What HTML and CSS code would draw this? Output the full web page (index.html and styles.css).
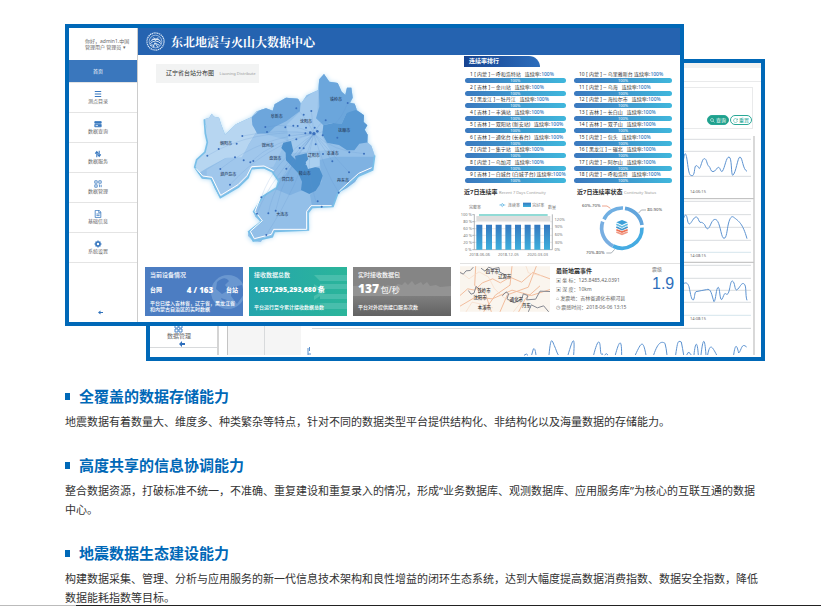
FILE: index.html
```html
<!DOCTYPE html>
<html lang="zh-CN">
<head>
<meta charset="utf-8">
<meta name="viewport" content="width=device-width, initial-scale=1">
<title>东北地震与火山大数据中心</title>
<link rel="stylesheet" href="styles.css">
</head>
<body>
<main class="page">
  <div class="hero">
    <section class="window window-back">
      <div class="back-strip"></div>
      <div class="back-bar"></div>
      <div class="back-filter">
        <button class="pill pill-solid" type="button"><svg viewBox="0 0 10 10"><circle cx="4" cy="4" r="3"/><path d="M6 6l3 3"/></svg>查询</button>
        <button class="pill" type="button"><svg viewBox="0 0 10 10"><path d="M8.500 3A4 4 0 1 0 9 6M9 1v3H6"/></svg>重置</button>
      </div>
      <svg class="back-plot" viewBox="150 128 611 228">
        <rect x="227" y="320" width="74" height="34" fill="#f5f5f5"/>
        <g fill="none" stroke="#d8dadc">
          <path d="M218 320V354" stroke="#d4d4d4" stroke-width="2"/>
          <path d="M227.500 320V354" stroke="#c4c4c4"/>
          <path d="M264.500 320V354M150 346.500H217"/>
          <path d="M312 327.500H751"/>
        </g>
        <path d="M175 324h3v3h-3zM179 324h3v3h-3zM175 328h3v3h-3zM179 328h3v3h-3z" fill="none" stroke="#4a86c8"/>
        <text x="179" y="337" class="t6 mid">数据管理</text>
        <path d="M179 343l3-3v2h3v2h-3v2z" fill="#2f6fbd"/>
        <path d="M308 347v7M309.500 346v4M308 353h3" stroke="#5b8fca" fill="none"/>
        <g transform="translate(680 50) scale(.3333)" fill="none">
          <path d="M0 265H213M0 301H213M0 376H213M0 451H213M0 491H213M0 529H213M0 568H213M0 643H213M0 682H213M0 718H213M0 754H213M0 832H213" stroke="#d9dcdf" stroke-width="3"/>
          <path d="M0 604H213M0 793H213" stroke="#d5e5ed" stroke-width="3"/>
          <path d="M0 443H222M0 634H222" stroke="#b9b9b9" stroke-width="3"/>
          <path d="M222 255V912" stroke="#c6c6c6" stroke-width="4"/>
          <g stroke="#5b92d0" stroke-width="3">
            <path d="M8 345C14 292 18 301 23 340S32 373 38 374C46 367 42 344 49 344S56 358 60 350S67 323 73 323C81 323 80 341 86 345S91 362 99 362S111 348 116 349S122 365 127 361C135 350 138 318 147 318C156 318 153 371 158 373C168 368 173 317 180 318C188 320 188 355 201 361"/>
            <path d="M8 510C17 481 20 492 23 510C29 536 38 497 49 498C56 500 55 510 60 514C67 513 70 517 74 521C82 543 87 532 94 516C101 502 108 503 113 511C122 526 124 562 132 562S141 537 145 519C150 499 155 495 160 498C177 511 188 517 201 563"/>
            <path d="M8 700C18 692 23 696 27 707C32 730 34 748 40 747C45 741 43 724 48 722C58 719 69 719 79 716C94 709 95 735 102 752C108 748 108 709 115 709C120 712 119 747 125 746C132 736 132 723 138 729C150 738 149 689 157 690C166 694 163 717 170 717C180 711 183 695 191 698C201 702 195 732 201 748"/>
          </g>
        </g>
        <g transform="translate(440 310) scale(.3333)" fill="none" stroke="#5b92d0" stroke-width="3">
          <path d="M252 133L259 129L264 133M275 132L280 114Q285 108 288 132M327 132C333 68 337 91 343 104S350 124 355 132M384 132C396 92 406 60 401 132M461 132C470 96 479 76 481 111S487 119 488 132M494 132L499 128L504 132M526 132C536 95 545 73 545 132M586 132C604 93 609 84 618 132M641 132C655 90 666 91 675 97Q679 111 681 132M707 132C713 90 714 88 724 93Q728 112 731 132M740 132L746 123L754 132M762 132C766 91 772 87 775 132M783 132C789 80 794 75 798 132M803 132C810 94 817 107 830 132M881 132C886 98 890 99 896 126C905 119 904 93 920 108"/>
        </g>
        <g class="t4" text-anchor="middle"><text x="698" y="192">14:06:15</text><text x="698" y="256">14:08:15</text><text x="698" y="319">14:08:15</text></g>
      </svg>
    </section>

    <section class="window window-front">
      <nav class="side">
        <div class="side-user"><span>你好，admin1.中国</span><span>管理用户 管理员 ▾</span></div>
        <a class="side-item side-active" href="#home">首页</a>
        <a class="side-item" href="#stations"><svg viewBox="0 0 10 10"><path d="M1 2h8M1 5h8M1 8h8" stroke-width="1.300"/></svg>测点目录</a>
        <a class="side-item" href="#monitor"><svg viewBox="0 0 10 10"><path d="M1 2h8v2H1zM1 5.500h8v3H1z" fill="currentColor"/><path d="M2 7h3" stroke="#fff"/></svg>数据查询</a>
        <a class="side-item" href="#service"><svg viewBox="0 0 10 10"><path d="M3.500 9V3M1.500 4.500L3.500 2L5.500 4.500M6.500 1v6M4.500 5.500L6.500 8L8.500 5.500" stroke-width="1.300"/></svg>数据服务</a>
        <a class="side-item" href="#data"><svg viewBox="0 0 10 10"><path d="M1 1h3v3H1zM6 1h3v3H6zM1 6h3v3H1zM6 6h1v3M9 6v3"/></svg>数据管理</a>
        <a class="side-item" href="#basic"><svg viewBox="0 0 10 10"><path d="M1.500.5h5l2 2v7h-7zM6 .5v3h2.500M3 5h4M3 7h4"/></svg>基础信息</a>
        <a class="side-item" href="#system"><svg viewBox="0 0 10 10"><circle cx="5" cy="5" r="2.500" stroke-width="2"/><path d="M5 .5v2M5 7.500v2M.5 5h2M7.500 5h2M2 2l1 1M7 7l1 1M8 2L7 3M2 8l1-1" stroke-width="1.500"/></svg>系统设置</a>
        <button class="side-fold" type="button" aria-label="收起"><svg viewBox="0 0 10 10"><path d="M0 5l5-4v3h5v2H5v3z" fill="currentColor"/></svg></button>
      </nav>
      <div class="board">
        <header class="board-head">
          <svg class="logo" viewBox="0 0 60 60" fill="none" stroke="#dbe8f7"><circle cx="30" cy="30" r="27" stroke-width="4" stroke-dasharray="4 2"/><circle cx="30" cy="30" r="20" stroke-width="2"/><path d="M14 30Q30 14 47 30M13 37Q30 20 48 37M22 49L28 34L38 49M29 35L43 42M13 43Q21 36 26 46M18 23H42M24 17L30 27L38 17" stroke-width="3"/></svg>
          <h1>东北地震与火山大数据中心</h1>
        </header>
        <div class="board-body">
          <div class="left">
            <div class="stage">
              <p class="map-label">辽宁省台站分布图 <small>Liaoning Distribute</small></p>
              <svg class="map" viewBox="0 0 600 540">
                <defs><clipPath id="land"><path id="shape" d="M43 163L58 158L65 146L72 155L87 158L93 178L105 209L138 178L185 156L200 139L228 130L248 137L254 118L288 98L324 101L333 116L350 91L384 76L388 43L402 27L418 50L443 54L455 80L466 90L471 68L484 68L488 98L480 113L494 116L501 136L522 151L521 171L532 181L524 194L533 209L532 232L544 242L554 271L548 315L506 333L495 350L470 369L444 383L429 424L367 427L354 443L355 495L253 499L247 515L222 517L212 531L190 528L174 512L176 500L214 470L196 455L191 440L209 416L219 394L260 368L266 348L247 320L222 308L184 311L174 338L145 366L115 385L91 398L75 371L63 341L37 339L25 324L14 306L20 284L45 261L52 232L46 205L50 181L43 178Z"/></clipPath></defs>
                <g class="map-glow"><use href="#shape"/></g>
                <g clip-path="url(#land)">
                  <path d="M0 0H600V540H0Z" fill="#93bfe8"/>
                  <path d="M30 130H200V200L175 240L160 280H105L50 310L0 340Z" fill="#b7d6f1"/>
                  <path d="M200 200L170 250L155 277L110 278L50 315V410H180V320L250 305L290 225Z" fill="#a0c7ec"/>
                  <path d="M185 156L228 120L290 85L333 105L330 138L290 168L255 185L235 205L202 206L187 180Z" fill="#6da6dc"/>
                  <path d="M333 110L385 70L382 160L400 180L396 214L420 255L300 265L290 180L330 140Z" fill="#a2c9ed"/>
                  <path d="M385 20H500V140L470 143L455 176L425 174L400 181L378 160L388 125Z" fill="#6ba6dc"/>
                  <path d="M400 181L430 174L455 176L470 143L498 135L540 155V231L508 236L493 256L471 256L447 240L411 233L397 207Z" fill="#5798d3"/>
                  <path d="M389 285L430 275H560V400L440 430H367L360 390L395 350Z" fill="#7fb2e2"/>
                  <path d="M210 370L285 330L325 270L355 310L360 370L325 380L300 391L255 372Z" fill="#80b2e2"/>
                  <path d="M280 233L303 228L310 258L303 270L317 284L315 273L350 265L354 282L346 300L388 309L398 332L389 359L377 377L358 387L333 375L336 350L325 325L288 286L287 263L274 249Z" fill="#4b8fcc"/>
                  <path d="M350 262L389 270V303L354 312L347 291L356 283Z" fill="#a9cff0"/>
                </g>
                <path d="M43 163L46 205L52 232L45 261L20 284L14 306L37 339L63 341L91 398L145 366L174 338L184 311L222 308L247 320L266 348L260 368L219 394L191 440L214 470L176 500L190 528L247 515L253 499L355 495L354 443L367 427L429 424L444 383L506 333L548 315L554 271" fill="none" stroke="#79bfe8" stroke-width="5"/>
                <path d="M18 310L38 333L66 337L92 391L144 359L171 332L185 305L222 303L251 317M209 403L195 439L217 467L181 499L193 521L244 508L251 493H350V439L363 422H425M448 378L506 325L545 308" fill="none" stroke="#fff" stroke-width="3"/>
                <g fill="none" stroke="#5f8fcb" opacity=".55"><path d="M372 206Q190 190 52 272M372 206Q220 210 91 312M372 206Q230 240 120 359M372 206Q250 225 181 292M372 206Q250 290 214 397M372 206Q280 320 257 437M372 206Q250 350 235 445M372 206Q240 340 201 446M372 206Q320 370 229 510M372 206Q320 280 289 311M372 206Q340 300 378 411M372 206Q400 310 446 383M372 206Q420 260 477 322M372 206Q430 260 522 266M372 206Q440 200 473 114M372 206Q350 160 319 130M372 206Q300 170 226 186M372 206Q270 190 157 213M372 206Q390 170 407 166M372 206L364 138M372 206L329 249M372 206L427 289M372 206L298 211M372 206L347 241M372 206L377 238"/></g>
                <g fill="#3a6fbd"><circle cx="52" cy="272" r="3"/><circle cx="91" cy="312" r="3"/><circle cx="120" cy="359" r="3"/><circle cx="181" cy="292" r="3"/><circle cx="190" cy="288" r="3"/><circle cx="214" cy="397" r="3"/><circle cx="257" cy="437" r="3"/><circle cx="235" cy="445" r="3"/><circle cx="201" cy="446" r="3"/><circle cx="229" cy="510" r="3"/><circle cx="289" cy="311" r="3"/><circle cx="383" cy="409" r="3"/><circle cx="395" cy="425" r="3"/><circle cx="446" cy="383" r="3"/><circle cx="477" cy="322" r="3"/><circle cx="522" cy="266" r="3"/><circle cx="478" cy="262" r="3"/><circle cx="473" cy="114" r="3"/><circle cx="319" cy="130" r="3"/><circle cx="226" cy="186" r="3"/><circle cx="231" cy="201" r="3"/><circle cx="157" cy="213" r="3"/><circle cx="86" cy="252" r="3"/><circle cx="140" cy="236" r="3"/><circle cx="135" cy="277" r="3"/><circle cx="161" cy="286" r="3"/><circle cx="407" cy="166" r="3"/><circle cx="364" cy="138" r="3"/><circle cx="341" cy="149" r="3"/><circle cx="329" cy="249" r="3"/><circle cx="341" cy="250" r="3"/><circle cx="427" cy="289" r="3"/><circle cx="399" cy="267" r="3"/><circle cx="298" cy="211" r="3"/><circle cx="310" cy="182" r="3"/><circle cx="286" cy="187" r="3"/><circle cx="323" cy="183" r="3"/><circle cx="319" cy="223" r="3"/><circle cx="377" cy="238" r="3"/><circle cx="442" cy="218" r="3"/><circle cx="398" cy="211" r="3"/><circle cx="346" cy="205" r="3"/><circle cx="361" cy="203" r="4"/><circle cx="372" cy="206" r="5"/><circle cx="382" cy="199" r="4"/><circle cx="374" cy="188" r="3"/><circle cx="348" cy="188" r="3"/></g>
                <g class="map-city"><text x="108" y="240">朝阳市</text><text x="115" y="333">葫芦岛市</text><text x="233" y="245">锦州市</text><text x="260" y="159">阜新市</text><text x="348" y="173">沈阳市</text><text x="438" y="109">铁岭市</text><text x="463" y="201">抚顺市</text><text x="256" y="285">盘锦市</text><text x="371" y="275">辽阳市</text><text x="428" y="269">本溪市</text><text x="344" y="331">鞍山市</text><text x="293" y="348">营口市</text><text x="459" y="350">丹东市</text><text x="277" y="452">大连市</text></g>
              </svg>
            </div>
            <div class="cards">
              <article class="card card-blue">
                <svg class="card-art" viewBox="0 0 98 49"><circle cx="83" cy="25" r="17" fill="#6a97d0"/><path d="M72 15Q80 8 84 14L80 18L84 23L77 27L71 22ZM87 20L97 18L99 27L92 37L86 29ZM76 31L82 33L80 40Z" fill="#4c7dc2"/></svg>
                <h2>当前设备情况</h2><p class="card-value card-split"><span>台网</span><b>4 / 163</b><span>台站</span></p><p class="card-note">平台已接入吉林省，辽宁省，黑龙江省<br>和内蒙古自治区的实时数据</p>
              </article>
              <article class="card card-green">
                <svg class="card-art" viewBox="0 0 98 49" fill="#48beac"><path d="M65 8H98V14H71ZM71 17H98V22H71ZM71 27H98V32H71ZM65 36H98V42H65L75 37ZM65 17L77 25L65 33V29L72 25L65 21Z"/></svg>
                <h2>接收数据总数</h2><p class="card-value card-count"><b>1,557,295,293,680 条</b></p><p class="card-note">平台运行至今累计接收数据总数</p>
              </article>
              <article class="card card-grey">
                <svg class="card-art" viewBox="0 0 98 49"><path d="M0 19L24 18L30 20L35 18L40 20L45 17L49 18L52 15L55 18L59 14L62 18L68 15L70 18L74 15L77 19L83 18L87 20L98 19V29H0Z" fill="#939393"/></svg>
                <h2>实时接收数据包</h2><p class="card-value"><strong>137</strong> <span>包/秒</span></p><p class="card-note">平台对外提供接口服务次数</p>
              </article>
            </div>
          </div>
          <div class="right">
            <h2 class="rank-title">连续率排行</h2>
            <div class="ranks">
              <ol class="rank-list">
                <li><p>1 [ 内蒙 ] -- 呼和浩特站 &nbsp; 连续率:<b>100%</b></p><span>100%</span></li>
                <li><p>2 [ 吉林 ] -- 金川站 &nbsp; 连续率:<b>100%</b></p><span>100%</span></li>
                <li><p>3 [ 黑龙江 ] -- 牡丹江 &nbsp; 连续率:<b>100%</b></p><span>100%</span></li>
                <li><p>4 [ 吉林 ] -- 丰满站 &nbsp; 连续率:<b>100%</b></p><span>100%</span></li>
                <li><p>5 [ 吉林 ] -- 双阳站 (新安站) &nbsp; 连续率:<b>100%</b></p><span>100%</span></li>
                <li><p>6 [ 吉林 ] -- 通化台 (长春台) &nbsp; 连续率:<b>100%</b></p><span>100%</span></li>
                <li><p>7 [ 内蒙 ] -- 集宁站 &nbsp; 连续率:<b>100%</b></p><span>100%</span></li>
                <li><p>8 [ 内蒙 ] -- 乌加河 &nbsp; 连续率:<b>100%</b></p><span>100%</span></li>
                <li><p>9 [ 吉林 ] -- 白城台 (白城子台) 连续率:<b>100%</b></p><span>100%</span></li>
              </ol>
              <ol class="rank-list">
                <li><p>10 [ 内蒙 ] -- 乌里雅斯台 连续率:<b>100%</b></p><span>100%</span></li>
                <li><p>11 [ 内蒙 ] -- 乌海 &nbsp; 连续率:<b>100%</b></p><span>100%</span></li>
                <li><p>12 [ 内蒙 ] -- 海拉尔市 &nbsp; 连续率:<b>100%</b></p><span>100%</span></li>
                <li><p>13 [ 吉林 ] -- 长白山 &nbsp; 连续率:<b>100%</b></p><span>100%</span></li>
                <li><p>14 [ 吉林 ] -- 双子山 &nbsp; 连续率:<b>100%</b></p><span>100%</span></li>
                <li><p>15 [ 内蒙 ] -- 包头 &nbsp; 连续率:<b>100%</b></p><span>100%</span></li>
                <li><p>16 [ 黑龙江 ] -- 碾北 &nbsp; 连续率:<b>100%</b></p><span>100%</span></li>
                <li><p>17 [ 内蒙 ] -- 阿尔山 &nbsp; 连续率:<b>100%</b></p><span>100%</span></li>
                <li><p>18 [ 内蒙 ] -- 呼和浩特 &nbsp; 连续率:<b>100%</b></p><span>100%</span></li>
              </ol>
            </div>
            <div class="charts">
              <section><h2>近7日连续率 <small>Recent 7 Days Continuity</small></h2>
                <svg viewBox="15 55 330 180">
                  <defs><linearGradient id="bar" x2="0" y2="1"><stop stop-color="#3478c0"/><stop offset="1" stop-color="#3fb0dc"/></linearGradient></defs>
                  <path d="M58 123H292M58 144H292M58 164H292M58 185H292" stroke="#ddd" stroke-width="2"/>
                  <path d="M64 106H286V121H64Z" fill="#dedede"/>
                  <path d="M72 103H278" stroke="#6ccfc9" stroke-width="4"/>
                  <path d="M58 101V207H292V101M52 102H58M52 123H58M52 144H58M52 164H58M52 185H58M52 207H58" fill="none" stroke="#8e9499" stroke-width="2"/>
                  <g fill="url(#bar)"><path d="M64 132H82V207H64ZM93 132H111V207H93ZM122 132H140V207H122ZM151 132H169V207H151ZM180 132H198V207H180ZM209 132H227V207H209ZM238 132H256V207H238ZM267 132H285V207H267Z"/><path d="M204 66H228V79H204Z"/></g>
                  <path d="M133 73H151M137 73L142 68L147 73L142 78Z" fill="#fff" stroke="#5ab4e3" stroke-width="2"/>
                  <g class="chart-text"><text x="177" y="78">连续率</text><text x="250" y="78">完好率</text><text x="60" y="86">完整率</text><text x="291" y="86">数量</text>
                  <text x="34" y="107">100 %</text><text x="38" y="128">80 %</text><text x="38" y="149">60 %</text><text x="38" y="170">40 %</text><text x="38" y="191">20 %</text><text x="40" y="211">0 %</text>
                  <text x="314" y="121">120%</text><text x="311" y="143">90%</text><text x="311" y="166">60%</text><text x="311" y="189">30%</text><text x="307" y="211">0%</text>
                  <text x="74" y="226">2018-06-06</text><text x="160" y="226">2018-12-05</text><text x="248" y="226">2020-03-03</text></g>
                </svg>
              </section>
              <section><h2>近7日连续率状态 <small>Continuity Status</small></h2>
                <svg viewBox="355 55 330 180">
                  <g fill="none" stroke-width="11"><path d="M448 116A60 60 0 0 1 505 82" stroke="#70afe2"/><path d="M511 83A60 60 0 0 1 562 133" stroke="#62a5dc"/><path d="M562 141A60 60 0 0 1 475 196" stroke="#45abe2"/><path d="M475 196A60 60 0 0 1 444 123" stroke="#78aee1"/></g>
                  <path d="M485 125L502 118L519 125L502 133Z" fill="#3b9fd8"/>
                  <g fill="none" stroke-width="5"><path d="M485 131L502 139L519 131" stroke="#64bde5"/><path d="M485 139L502 147L519 139" stroke="#4094cb"/><path d="M485 147L502 154L519 147" stroke="#ee7154"/><path d="M485 154L502 161L519 154" stroke="#f09b87"/></g>
                  <path d="M442 76H457L467 83" fill="none" stroke="#e47958" stroke-width="2"/><path d="M552 97L560 88H574M455 217H470L480 206" fill="none" stroke="#808b94" stroke-width="2"/>
                  <g class="donut-text"><text x="410" y="80">60%-70%</text><text x="600" y="92">80-90%</text><text x="422" y="220">70%-80%</text></g>
                </svg>
              </section>
            </div>
            <div class="quake">
              <svg viewBox="15 262 270 137">
                <path d="M15 262H285V399H15Z" fill="#faf5ee"/>
                <path d="M15 350L38 330L60 334L82 312L113 300L136 312L165 295L200 310L233 281L285 300M62 262L59 320L92 346L109 399M15 382L61 355L112 360L171 334L229 350L285 332M86 399L121 349L165 319L171 262M135 399L157 348L220 325L244 262M191 399L210 361L255 321" fill="none" stroke="#f2bd9d" stroke-width="3"/>
                <path d="M15 278L42 300L72 279L100 294L118 329L143 354L170 370L210 374M33 399L51 370L80 376L114 387M213 262L220 282L264 292M175 399L200 367" fill="none" stroke="#f8d9c4" stroke-width="2"/>
                <path d="M15 281L25 286L33 276L46 275L55 265M78 268L90 277L101 265L113 270L132 266L134 280L149 287M40 335L48 346L57 343L63 323L73 331M142 351L153 339L161 345L156 360L177 372L200 361L205 345L218 350L215 363L242 361L255 337L285 338M220 399L229 378L247 387L266 381L281 399" fill="none" stroke="#858891" stroke-width="3"/>
                <g class="local-text"><text x="112" y="282">四平市</text><text x="149" y="298">辽源市</text><text x="87" y="339">铁岭市</text><text x="75" y="361">沈阳市</text><text x="88" y="391">本溪市</text><text x="184" y="367">通化市</text><text x="214" y="386">丹东</text></g>
              </svg>
              <section class="quake-info"><h2>最新地震事件</h2><p>▣ 坐 标：125.8485,42.0391</p><p>▣ 深 度：10km</p><p>⌂ 发震地：吉林省通化市柳河县</p><p>◷ 震感时间：2018-06-06 13:15</p></section>
              <p class="level">震级<b>1.9</b></p>
            </div>
          </div>
        </div>
      </div>
    </section>
  </div>

  <section class="feature"><h2>全覆盖的数据存储能力</h2><p>地震数据有着数量大、维度多、种类繁杂等特点，针对不同的数据类型平台提供结构化、非结构化以及海量数据的存储能力。</p></section>
  <section class="feature"><h2>高度共享的信息协调能力</h2><p>整合数据资源，打破标准不统一，不准确、重复建设和重复录入的情况，形成“业务数据库、观测数据库、应用服务库”为核心的互联互通的数据中心。</p></section>
  <section class="feature"><h2>地震数据生态建设能力</h2><p>构建数据采集、管理、分析与应用服务的新一代信息技术架构和良性增益的闭环生态系统，达到大幅度提高数据消费指数、数据安全指数，降低数据能耗指数等目标。</p></section>
</main>
<div class="bottom-edge"></div>
</body>
</html>
```
FILE: styles.css
```css
* { box-sizing: border-box; margin: 0; padding: 0; }
body { background: #fff; color: #333; font-family: "Noto Sans", "Noto Sans CJK SC", sans-serif; }
button { font: inherit; border: 0; background: none; }
a { color: inherit; text-decoration: none; }
svg { display: block; }
ol { list-style: none; }

.page { max-width: 829px; margin: 0 auto; padding: 24px 56px 0 65px; }
.hero { position: relative; margin-bottom: 25px; padding: 35px 0 0 81px; }
.window { background: #fff; border: 4px solid #0068b7; overflow: hidden; }

/* rear window */
.window-back { height: 302px; display: flex; flex-direction: column; }
.back-strip { height: 5px; background: #f1f2f2; }
.back-bar { height: 14px; border-bottom: 1px solid #e9eaeb; }
.back-filter { height: 42px; margin: 5px 8px 0 0; border: 1px solid #e9eaeb; display: flex; justify-content: flex-end; align-items: flex-end; gap: 1px; padding-bottom: 3px; }
.back-plot { width: 100%; height: auto; }
.pill { height: 10px; padding: 0 2px; border: 1px solid #2aa897; border-radius: 5px; color: #2aa897; font-size: 5px; line-height: 8px; display: flex; align-items: center; gap: 1px; }
.pill svg { width: 5px; height: 5px; fill: none; stroke: currentColor; }
.pill-solid { background: #1fa18d; color: #fff; }
.t6 { font-size: 6px; fill: #666; }
.t4 { font-size: 4px; fill: #666; }
.mid { text-anchor: middle; }

/* front window */
.window-front { position: absolute; top: 0; left: 0; right: 81px; display: grid; grid-template-columns: 69px 1fr; }
.side { border-right: 1px solid #ccc; display: flex; flex-direction: column; color: #666; font-size: 5px; line-height: 7px; }
.side-user { height: 32px; display: flex; flex-direction: column; justify-content: center; padding-left: 16px; font-size: 5px; line-height: 6px; white-space: nowrap; }
.side-item { height: 30px; border-bottom: 1px solid #e4e4e4; display: flex; flex-direction: column; align-items: center; justify-content: center; padding-right: 10px; }
.side-item svg { width: 8px; height: 8px; fill: none; stroke: currentColor; color: #3978bf; }
.side-active { height: 23px; background: #3a77bd; color: #fff; }
.side-fold { color: #3073bc; align-self: center; margin: auto 5px 7px 0; }
.side-fold svg { width: 5px; height: 5px; }
.board { min-width: 0; }
.board-head { height: 27px; background: #2563b0; color: #fff; display: flex; align-items: center; gap: 6px; padding-left: 8px; }
.board-head .logo { width: 19px; height: 19px; }
.board-head h1 { font-size: 12px; line-height: 16px; font-family: "Noto Serif CJK SC", "Noto Sans CJK SC", serif; }
.board-body { display: grid; grid-template-columns: 317fr 225fr; height: 267px; }
.left { min-width: 0; }
.stage { height: 212px; display: grid; }
.stage > * { grid-area: 1 / 1; }
.map-label { justify-self: start; align-self: start; margin: 9px 0 0 18px; height: 19px; width: 103px; background: #f2f3f3; padding-left: 10px; font-size: 6px; line-height: 18px; white-space: nowrap; }
.map-label small { font-size: 4px; color: #999; margin-left: 4px; }
.map { width: 200px; height: 180px; margin: 10px 0 0 52px; overflow: visible; }
.map-glow { fill: #9fd2f2; filter: drop-shadow(0 2px 8px #a5d6f4); }
.map-city { font-size: 12px; font-weight: 500; fill: #263b5c; text-anchor: middle; }
.cards { display: grid; grid-template-columns: repeat(3, 1fr); gap: 6px; padding: 0 4px 0 7px; }
.card { position: relative; height: 49px; color: #fff; padding: 4px 5px; white-space: nowrap; overflow: hidden; }
.card > * { position: relative; }
.card .card-art { position: absolute; top: 0; left: 0; width: 100%; height: 100%; }
.card-blue { background: #4c7dc2; }
.card-green { background: linear-gradient(90deg, #25a5ad, #2bb59a); }
.card-grey { background: linear-gradient(#858585 50%, #626262); }
.card h2 { font-size: 6px; line-height: 9px; font-weight: 500; }
.card-value { font-size: 6px; line-height: 20px; height: 20px; font-weight: 700; }
.card-split { display: flex; justify-content: space-between; }
.card-split b { font-size: 8px; margin-left: 12px; }
.card-count b { font-size: 7px; }
.card-value strong { font-size: 12px; line-height: 16px; }
.card-value strong + span { font-size: 8px; font-weight: 400; }
.card-note { font-size: 5px; line-height: 6px; font-weight: 500; }
.card-green .card-note, .card-grey .card-note { margin-top: 4px; }

.right { min-width: 0; }
.rank-title { width: 76px; height: 11px; margin: 1px 0 4px 9px; padding-left: 5px; border-radius: 0 12px 0 0; background: linear-gradient(90deg, #164391, #2c6dbb); color: #fff; font-size: 6px; line-height: 10px; }
.ranks { display: grid; grid-template-columns: repeat(2, minmax(0, 1fr)); gap: 11px; padding: 0 8px 0 10px; height: 113px; }
.rank-list { display: grid; grid-template-rows: repeat(9, 1fr); }
.rank-list p { font-size: 5px; line-height: 7px; padding-left: 5px; white-space: nowrap; color: #333; }
.rank-list b { color: #2f78bd; font-weight: 500; }
.rank-list span { display: block; height: 5px; border-radius: 3px; background: linear-gradient(90deg, #3b79bf, #40b7dc); color: #fff; font-size: 4px; line-height: 5px; text-align: center; }
.charts { display: grid; grid-template-columns: 113px minmax(0, 1fr); margin: 3px 0 0 5px; height: 77px; border-bottom: 1px solid #e2e2e2; }
.charts h2 { font-size: 6px; line-height: 10px; padding-left: 4px; white-space: nowrap; }
.charts h2 small { font-size: 4px; font-weight: 400; color: #999; }
.charts svg { width: 110px; height: 60px; margin-top: 1px; }
.chart-text { font-size: 12px; fill: #777; text-anchor: middle; }
.donut-text { font-size: 13px; fill: #444; text-anchor: middle; }
.local-text { font-size: 13px; font-weight: 500; fill: #333; text-anchor: middle; }
.quake { display: grid; grid-template-columns: 90px 1fr 28px; padding: 2px 0 0 5px; gap: 6px; }
.quake > svg { width: 90px; height: 46px; }
.quake-info { white-space: nowrap; font-size: 5px; color: #666; }
.quake-info h2 { font-size: 6px; line-height: 10px; color: #333; }
.quake-info p { line-height: 9px; }
.level { font-size: 5px; line-height: 7px; color: #777; white-space: nowrap; }
.level b { display: block; color: #2e6ebb; font: 16px/22px "Liberation Sans", sans-serif; }

/* feature copy */
.feature { margin-bottom: 24px; }
.feature:last-child { margin-bottom: 0; }
.feature h2 { display: flex; align-items: center; gap: 9px; margin-bottom: 5px; color: #0068b7; font-size: 15px; line-height: 21px; font-weight: 700; }
.feature h2::before { content: ""; width: 5px; height: 7px; background: #0068b7; }
.feature p { font-size: 11px; line-height: 19px; }
.bottom-edge { position: fixed; left: 0; right: 0; bottom: 0; height: 1px; background: linear-gradient(90deg, #bbb 76px, #222 76px); }
```
